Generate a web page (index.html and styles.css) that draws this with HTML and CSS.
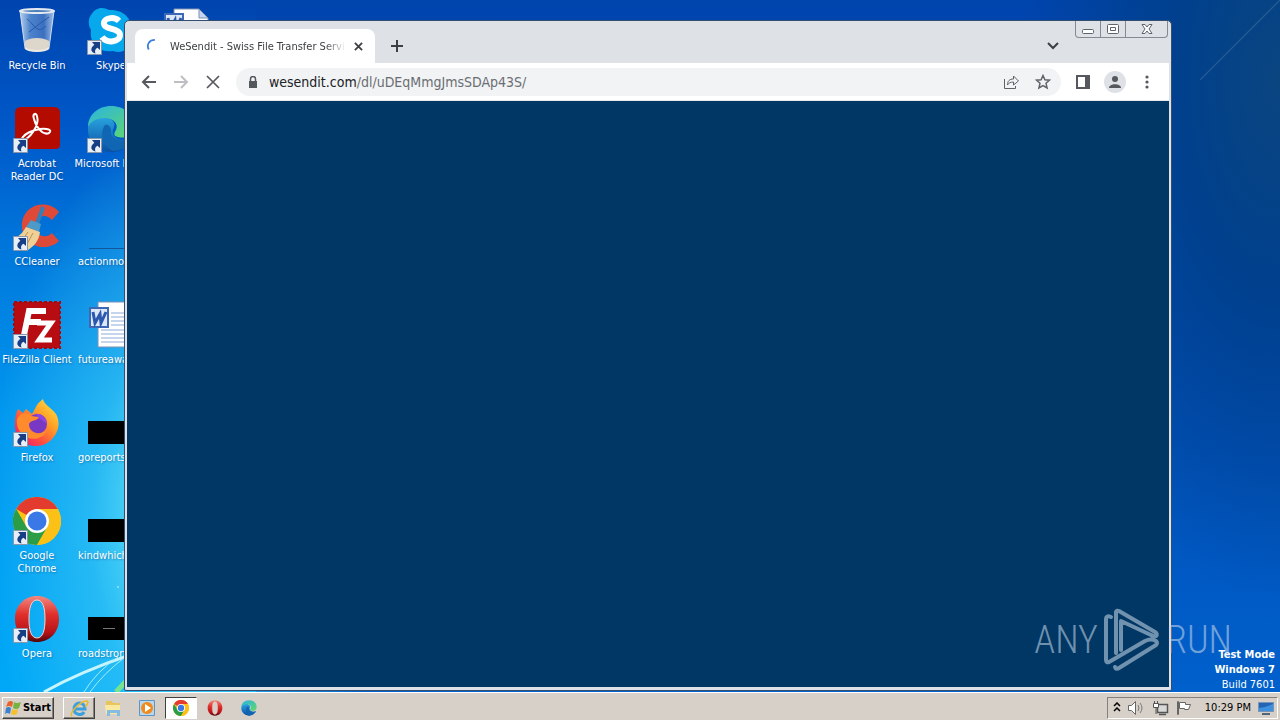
FILE: index.html
```html
<!DOCTYPE html>
<html lang="en">
<head>
    <meta charset="UTF-8">
    <meta name="viewport" content="width=device-width, initial-scale=1.0">
    <title>Desktop</title>
    <link rel="stylesheet" href="styles.css">
</head>
<body>

<!-- Shared drawings -->
<svg class="defs" width="0" height="0" aria-hidden="true">
    <defs>
        <linearGradient id="opera-red" x1="0" y1="0" x2="0" y2="1">
            <stop offset="0" stop-color="#f08a80"/><stop offset=".4" stop-color="#e0302c"/><stop offset=".8" stop-color="#b51218"/><stop offset="1" stop-color="#500508"/>
        </linearGradient>
        <linearGradient id="edge-blue" x1="0" y1="0" x2="0" y2="1">
            <stop offset="0" stop-color="#2aa6e0"/><stop offset="1" stop-color="#0b4fa3"/>
        </linearGradient>
        <linearGradient id="edge-green" x1="0" y1="0" x2="1" y2="1">
            <stop offset="0" stop-color="#29b4e2"/><stop offset="1" stop-color="#62d968"/>
        </linearGradient>
        <linearGradient id="fox" x1="1" y1="0" x2=".1" y2="1">
            <stop offset="0" stop-color="#fff04a"/><stop offset=".4" stop-color="#ff9d24"/><stop offset=".7" stop-color="#ff4b40"/><stop offset="1" stop-color="#e3197a"/>
        </linearGradient>
        <linearGradient id="bin-glass" x1="0" y1="0" x2="1" y2="0">
            <stop offset="0" stop-color="#b8cfea"/><stop offset=".3" stop-color="#4d84cc"/><stop offset=".7" stop-color="#3b6fc0"/><stop offset="1" stop-color="#a3bfe4"/>
        </linearGradient>
    </defs>
    <symbol id="arrow" viewBox="0 0 15 15">
        <path fill="#e8eef6" stroke="#8a97ab" d="M.5.5h14v14H.5z"/>
        <path fill="#183f86" d="M5 2h8v8l-2.500-2.300C8 9 7.500 11 8.500 13.500 4 12.500 2.500 8.500 7.300 4.700z"/>
    </symbol>
    <symbol id="chrome" viewBox="0 0 48 48">
        <circle cx="24" cy="24" r="24" fill="#fbc116"/>
        <path fill="#e33b2e" d="M24 24 3.200 12A24 24 0 0 1 44.800 12L24 12z"/>
        <path fill="#2a9d46" d="M3.200 12A24 24 0 0 0 24 48L34.400 30 24 24 13.600 30z"/>
        <path fill="#fbc116" d="M24 12h20.800A24 24 0 0 1 24 48l10.400-18z"/>
        <circle cx="24" cy="24" r="12" fill="#fff"/>
        <circle cx="24" cy="24" r="9.500" fill="#3b78e7"/>
    </symbol>
    <symbol id="opera" viewBox="0 0 48 48">
        <path fill="url(#opera-red)" fill-rule="evenodd" d="M24 1C37 1 46 11 46 24S37 47 24 47 2 37 2 24 11 1 24 1zM24 5c-6 0-8 8-8 19s2 19 8 19 8-8 8-19-2-19-8-19z"/>
        <path fill="none" stroke="#ffd0c8" stroke-width="1" d="M24 5c-6 0-8 8-8 19s2 19 8 19 8-8 8-19-2-19-8-19z"/>
    </symbol>
    <symbol id="edge" viewBox="0 0 48 48">
        <path fill="url(#edge-blue)" d="M1 22C4 10 17 8 25 15c4 4 2 7 1 10-2 7 6 12 19 9-5 9-13 14-22 13C9 46 0 36 1 22z"/>
        <path fill="url(#edge-green)" d="M1 22C1 10 11 1 24 1c14 0 23 9 23 20 0 10-9 13-16 11-5-1-4-4-2-7 3-6-3-12-11-12C9 13 3 17 1 22z"/>
        <path fill="#1166b4" d="M18 20c-6 8-2 21 8 26 8 0 15-5 19-12-12 5-22 0-21-9 0-3-3-6-6-5z"/>
    </symbol>
</svg>

<main class="desktop">
    <svg class="light-rays" viewBox="0 0 130 120" aria-hidden="true">
        <path d="M44 120Q80 100 130 83" stroke="#c6f5ff" stroke-width="3"/>
        <path d="M84 120Q96 100 118 85M90 120Q104 101 124 86" stroke="#a5edff" stroke-width="1"/>
        <path d="M116 120l14-15" stroke="#76e48e" stroke-width="5"/>
        <path d="M117 15h2" stroke="#c6f5ff" stroke-width="1"/>
    </svg>

    <div class="icons">
        <a class="icon" href="#">
            <svg viewBox="0 0 48 48">
                <path fill="url(#bin-glass)" stroke="#cfdcf0" d="M7 4h34l-5 37c-4 4-20 4-24 0z"/>
                <path fill="#ddd7cb" d="M12 34c6-4 18-4 24 0v7c-4 4-20 4-24 0z"/>
                <path fill="none" stroke="#ece9e4" stroke-width="2" d="M12 41c5 4 19 4 24 0"/>
                <path fill="none" stroke="#2559a9" d="M14 12c8 6 10 16 19 7M16 25l9-7 11-8"/>
                <ellipse cx="24" cy="4" rx="17" ry="2" fill="#4c7fbd" stroke="#e5eaf0" stroke-width="2"/>
            </svg>
            <span>Recycle Bin</span>
        </a>
        <a class="icon" href="#">
            <svg viewBox="0 0 48 48">
                <path fill="#b30b00" d="M8 2h33q6 0 6 6v32q0 4-5 4H7q-5 0-5-5V8q0-6 6-6z"/>
                <path fill="none" stroke="#fff" stroke-width="2" d="M10 35c6-1 17-14 14-24-1-4-5-2-3 3 2 8 9 17 15 14 4-3-2-5-9-4-8 1-15 5-17 8-1 1-1 2 0 3z"/>
                <use href="#arrow" x="0" y="33" width="15" height="15"/>
            </svg>
            <span>Acrobat<br>Reader DC</span>
        </a>
        <a class="icon" href="#">
            <svg viewBox="0 0 48 48">
                <path fill="#df4938" d="M46 9C40 1 27-1 18 5S6 23 12 34s24 14 34 4l-7-8c-7 7-17 2-17-7s10-14 17-6z"/>
                <path stroke="#337fb9" stroke-width="4" d="M30 4 24 21"/>
                <path fill="#4b9ac8" d="M18 17l10 4-2 8-13-5z"/>
                <path fill="#efd097" d="M13 24l14 5c-1 9-6 14-12 18L1 35c6-2 9-6 12-11z"/>
                <path stroke="#c98f49" d="M15 29 8 39M20 30l-7 13"/>
                <use href="#arrow" x="0" y="33" width="15" height="15"/>
            </svg>
            <span>CCleaner</span>
        </a>
        <a class="icon" href="#">
            <svg viewBox="0 0 48 48">
                <path fill="#b60c12" stroke="#a20b10" stroke-width="2" stroke-dasharray="3 2" d="M1 1h46v46H1z"/>
                <path fill="none" stroke="#fff" stroke-width="6" d="M11 34 16 10h17M13 21h15"/>
                <path fill="none" stroke="#fff" stroke-width="5" d="M24 22h14L26 39h13"/>
                <use href="#arrow" x="0" y="33" width="15" height="15"/>
            </svg>
            <span>FileZilla Client</span>
        </a>
        <a class="icon" href="#">
            <svg viewBox="0 0 48 48">
                <path fill="url(#fox)" d="M5 10l5 4 3-4 6 5c2-3 3-6 5-9 2-3 4-4 6-6 1 6 9 9 13 15 8 14-4 32-19 32S1 37 2 24c0-6 1-10 3-14z"/>
                <circle cx="24" cy="25" r="10" fill="#7838c4"/>
                <path fill="#ff8b2c" d="M4 20c4-7 10-7 14-3l8 1c-1 4-9 3-10 7 0 10 12 12 19 5-3 9-15 13-23 7-6-4-9-10-8-17z"/>
                <path fill="#8e46dc" d="M22 15c7-1 12 4 12 10l-8-6z"/>
                <use href="#arrow" x="0" y="33" width="15" height="15"/>
            </svg>
            <span>Firefox</span>
        </a>
        <a class="icon" href="#">
            <svg viewBox="0 0 48 48">
                <use href="#chrome" width="48" height="48"/>
                <use href="#arrow" x="0" y="33" width="15" height="15"/>
            </svg>
            <span>Google<br>Chrome</span>
        </a>
        <a class="icon" href="#">
            <svg viewBox="0 0 48 48">
                <use href="#opera" width="48" height="48"/>
                <use href="#arrow" x="0" y="33" width="15" height="15"/>
            </svg>
            <span>Opera</span>
        </a>

        <a class="icon" href="#">
            <svg viewBox="0 0 48 48">
                <path fill="#08a8ec" d="M4 8C8 1 15-1 22 3c17-1 25 12 22 24 3 13-8 21-18 17C12 46 2 37 4 23 1 18 1 12 4 8z"/>
                <path fill="none" stroke="#fff" stroke-width="6" d="M32 14c-5-5-16-3-15 3s16 4 16 11-13 9-18 2"/>
                <use href="#arrow" x="0" y="33" width="15" height="15"/>
            </svg>
            <span>Skype</span>
        </a>
        <a class="icon" href="#">
            <svg viewBox="0 0 48 48">
                <use href="#edge" width="48" height="48"/>
                <use href="#arrow" x="0" y="33" width="15" height="15"/>
            </svg>
            <span>Microsoft Edge</span>
        </a>
        <a class="icon cut" href="#">
            <svg viewBox="0 0 48 48"><path fill="#12579b" d="M2 45h46v1H2z"/></svg>
            <span>actionmor</span>
        </a>
        <a class="icon cut" href="#">
            <svg viewBox="0 0 48 48">
                <path fill="#fff" stroke="#7d91b5" d="M11 1h36v45H11z"/>
                <path stroke="#8eabd9" d="M24 12h22M24 16h22M24 20h22M24 24h22M14 29h32M14 33h32M14 37h32M14 41h32"/>
                <path fill="#dce7f8" stroke="#3d68b5" stroke-width="2" d="M3 7h18v19H3z"/>
                <path fill="none" stroke="#2b59ad" stroke-width="3" d="M6 11l2 11 5-9 1 9 5-11"/>
            </svg>
            <span>futureawa</span>
        </a>
        <a class="icon cut" href="#">
            <svg viewBox="0 0 48 48"><path d="M1 22h47v23H1z"/></svg>
            <span>goreports</span>
        </a>
        <a class="icon cut" href="#">
            <svg viewBox="0 0 48 48"><path d="M1 22h47v23H1z"/></svg>
            <span>kindwhich</span>
        </a>
        <a class="icon cut" href="#">
            <svg viewBox="0 0 48 48"><path d="M1 22h47v23H1z"/><path fill="#777" d="M16 33h12v1H16z"/></svg>
            <span>roadstron</span>
        </a>

        <a class="icon" href="#" aria-label="Document">
            <svg viewBox="0 0 48 48">
                <path fill="#fff" stroke="#7d91b5" d="M13 2h25l9 9v35H13z"/>
                <path fill="#c4d4ee" stroke="#7d91b5" d="M38 2v9h9z"/>
                <path fill="#dce7f8" stroke="#3d68b5" stroke-width="2" d="M4 7h18v19H4z"/>
                <path fill="none" stroke="#2b59ad" stroke-width="3" d="M7 11l2 11 5-9 1 9 5-11"/>
            </svg>
        </a>
    </div>

    <div class="build">
        <strong>Test Mode</strong>
        <strong>Windows 7</strong>
        <span>Build 7601</span>
    </div>

    <section class="window">
        <div class="tab-strip">
            <div class="tab">
                <svg class="spinner" viewBox="0 0 16 16"><path fill="none" stroke="#3b7ddd" stroke-width="2" d="M2 12C-1 6 3 1 9 1"/></svg>
                <span class="tab-title">WeSendit - Swiss File Transfer Service</span>
                <button class="tab-close" aria-label="Close tab">
                    <svg viewBox="0 0 10 10"><path stroke="#3c4043" stroke-width="2" d="M1 1l8 8M9 1 1 9"/></svg>
                </button>
            </div>
            <button class="new-tab" aria-label="New tab">
                <svg viewBox="0 0 12 12"><path stroke="#3c4043" stroke-width="2" d="M6 0v12M0 6h12"/></svg>
            </button>
            <button class="tab-search" aria-label="Search tabs">
                <svg viewBox="0 0 12 12"><path fill="none" stroke="#3c4043" stroke-width="2" d="M1 3l5 5 5-5"/></svg>
            </button>
            <div class="caption">
                <button aria-label="Minimize"><svg viewBox="0 0 14 12"><rect x="1.500" y="6.500" width="11" height="4" rx="1" fill="#fff" stroke="#5f646c"/></svg></button>
                <button aria-label="Maximize"><svg viewBox="0 0 14 12"><rect x="1.500" y="1.500" width="11" height="9" rx="1" fill="#fff" stroke="#5f646c"/><path fill="none" stroke="#5f646c" d="M4.500 4.500h5v3h-5z"/></svg></button>
                <button class="wide" aria-label="Close"><svg viewBox="0 0 14 12"><path fill="#fff" stroke="#5f646c" d="M2 1.500h3l2 2.500 2-2.500h3L9 6l3 4.500H9L7 8l-2 2.500H2L5 6z"/></svg></button>
            </div>
        </div>
        <div class="toolbar">
            <button aria-label="Back"><svg viewBox="0 0 16 16"><path fill="none" stroke="#55585d" stroke-width="2" d="M15 8H2M8 2 2 8l6 6"/></svg></button>
            <button aria-label="Forward"><svg viewBox="0 0 16 16"><path fill="none" stroke="#bdbfc2" stroke-width="2" d="M1 8h13M8 2l6 6-6 6"/></svg></button>
            <button aria-label="Stop"><svg viewBox="0 0 16 16"><path stroke="#55585d" stroke-width="1.700" d="M2 2l12 12M14 2 2 14"/></svg></button>
            <div class="address">
                <svg class="lock" viewBox="0 0 10 12"><path fill="#55585d" d="M1 5h8v7H1z"/><path fill="none" stroke="#55585d" stroke-width="1.500" d="M2.500 5V3a2.500 2.500 0 0 1 5 0v2"/></svg>
                <a class="url" href="#">wesendit.com<span>/dl/uDEqMmgJmsSDAp43S/</span></a>
                <button aria-label="Share"><svg viewBox="0 0 16 16"><path fill="none" stroke="#5f6368" d="M1.500 5v9.500h11V12M4.500 11c0-4 2-6 6-6V2l5 5-5 4V8c-3 0-5 1-6 3z"/></svg></button>
                <button aria-label="Bookmark"><svg viewBox="0 0 16 16"><path fill="none" stroke="#5f6368" stroke-width="1.500" d="M8 1.500l1.900 4.300 4.600.4L11 9.300l1.100 4.600L8 11.500l-4.100 2.400L5 9.300 1.500 6.200l4.600-.4z"/></svg></button>
            </div>
            <button aria-label="Side panel"><svg viewBox="0 0 16 16"><path fill="#55585d" fill-rule="evenodd" d="M1 1h14v14H1zM3 3v10h7V3z"/></svg></button>
            <button class="profile" aria-label="Profile"><svg viewBox="0 0 16 16"><circle cx="8" cy="5" r="3" fill="#55585d"/><path fill="#55585d" d="M2 14c0-5 12-5 12 0z"/></svg></button>
            <button aria-label="Menu"><svg viewBox="0 0 16 16"><g fill="#55585d"><circle cx="8" cy="3" r="1.600"/><circle cx="8" cy="8" r="1.600"/><circle cx="8" cy="13" r="1.600"/></g></svg></button>
        </div>
        <div class="page"></div>
    </section>

    <div class="watermark">
        <span>ANY</span>
        <svg viewBox="0 0 56 64">
            <path fill="none" stroke="currentColor" stroke-width="4" stroke-linejoin="round" stroke-linecap="round" d="M12 45V4q1-2 3-1L51 24q3 2 1 4-2 1-5-1L17 13v29M7 9Q2 7 2 11v41q0 3 3 2l36-21M5 54l36-21q6-3 11 0 2 2 0 4L15 60q-3 2-4-1"/>
        </svg>
        <span>RUN</span>
    </div>
</main>

<footer class="taskbar">
    <button class="start">
        <svg viewBox="0 0 16 16"><path fill="#e8622a" d="M3 2q3-2 5 0L7 7Q4 5 1 7z"/><path fill="#77b43f" d="M9 2q3 2 7 0l-2 6q-3 2-6 0z"/><path fill="#3b82d0" d="M1 8q3-2 5 0l-1 6q-3-2-5 0z"/><path fill="#f5c02c" d="M7 9q3 2 6 0l-1 5q-3 2-6 0z"/></svg>
        Start
    </button>
    <button class="task raised" aria-label="Internet Explorer">
        <svg viewBox="0 0 20 20"><path fill="none" stroke="#3ba0de" stroke-width="3" d="M5 11h11c0-8-11-8-11 0 0 6 8 7 10 3"/><path fill="none" stroke="#e9b92d" stroke-width="1.500" d="M3 18c-4-3 10-16 15-15 2 1 0 4-2 6"/></svg>
    </button>
    <button class="task" aria-label="Explorer">
        <svg viewBox="0 0 20 20"><path fill="#e9c45c" d="M3 3h6l1 2h7v11H3z"/><path fill="#fbe9a0" d="M2 7h15v9H3z"/><path fill="#85bde2" d="M4 12h13v6h-3v-3H7v3H4z"/></svg>
    </button>
    <button class="task" aria-label="Media Player">
        <svg viewBox="0 0 20 20"><path fill="#b9d6ec" stroke="#5c96c5" d="M2.500 2.500h15v15h-15z"/><circle cx="10" cy="10" r="6" fill="#f08a1c"/><path fill="#fff" d="M8 6l6 4-6 4z"/></svg>
    </button>
    <button class="task active" aria-label="Chrome">
        <svg viewBox="0 0 20 20"><use href="#chrome" x="2" y="2" width="16" height="16"/></svg>
    </button>
    <button class="task" aria-label="Opera">
        <svg viewBox="0 0 20 20"><use href="#opera" x="2" y="2" width="16" height="16"/></svg>
    </button>
    <button class="task" aria-label="Edge">
        <svg viewBox="0 0 20 20"><use href="#edge" x="2" y="2" width="16" height="16"/></svg>
    </button>
    <div class="tray">
        <svg class="small" viewBox="0 0 8 12"><path fill="none" stroke="#000" stroke-width="1.500" d="M1 4l3-3 3 3M1 9l3-3 3 3"/></svg>
        <svg viewBox="0 0 18 16"><path fill="#fff" stroke="#666" d="M1.500 5.500h3l4-4v13l-4-4h-3z"/><path fill="none" stroke="#777" d="M11 5q2 3 0 6M13 3q4 5 0 10"/></svg>
        <svg viewBox="0 0 18 16"><path fill="#d8d8d8" stroke="#555" stroke-width="1.500" d="M6.500 4.500h10v8h-10zM8 14.500h7"/><path fill="#fff" stroke="#555" d="M2.500 3.500h5v4h-5zM3.500 1v2M6.500 1v2M5 8v6"/></svg>
        <svg viewBox="0 0 18 16"><path fill="#fff" stroke="#666" d="M2.500 1.500h1v13h-1zM4.500 2.500h6v2h5l-2 5H9.500v-1h-5z"/></svg>
        <time>10:29 PM</time>
        <svg viewBox="0 0 18 16"><path fill="#2364b4" stroke="#7893b5" d="M1.500 2.500h15v9h-15z"/><path fill="#3d91df" d="M2 8q7-1 14-4v7H2z"/><path stroke="#52637c" stroke-width="2" d="M5 14h8"/></svg>
    </div>
</footer>

</body>
</html>
```
FILE: styles.css
```css
* {
    box-sizing: border-box;
}

body {
    margin: 0;
    height: 100vh;
    display: flex;
    flex-direction: column;
    overflow: hidden;
    font-family: "DejaVu Sans Condensed", "Noto Sans", sans-serif;
    font-size: 11px;
    line-height: 13px;
}

button {
    display: flex;
    align-items: center;
    justify-content: center;
    margin: 0;
    padding: 0;
    border: 0;
    background: none;
    font: inherit;
}

svg {
    display: block;
    flex: none;
}

.defs {
    position: absolute;
}

/* Wallpaper */
.desktop {
    position: relative;
    flex: 1;
    min-height: 0;
    background:
        linear-gradient(135deg, transparent 49%, #ffffff20 50%, transparent 51%) right top / 80px 80px no-repeat,
        radial-gradient(ellipse 260px 520px at 100% 80px, #0a4580 0%, #00408d 40%, transparent 100%),
        radial-gradient(ellipse 200px 400px at 190px 520px, #7af0f5 0%, #42cdf690 50%, transparent 100%),
        linear-gradient(#0044ae 0%, #0058c8 18%, #007add 38%, #0097ef 60%, #00a8f7 100%) left / 20% 100% no-repeat,
        linear-gradient(#0044ae, #0050b8 60%, #0060cc);
}

.light-rays {
    position: absolute;
    left: 0;
    bottom: 0;
    width: 130px;
    height: 120px;
    fill: none;
}

.icons {
    display: grid;
    grid-auto-flow: column;
    grid-template-rows: repeat(7, 98px);
    grid-auto-columns: 74px;
    padding-top: 7px;
}

.icon {
    display: flex;
    flex-direction: column;
    align-items: center;
    gap: 4px;
    color: #fff;
    text-align: center;
    text-decoration: none;
    text-shadow: 1px 1px 2px #00205060;
    white-space: nowrap;
}

.icon svg {
    width: 48px;
    height: 48px;
}

.icon.cut span {
    align-self: flex-start;
    padding-left: 4px;
}

.build {
    position: absolute;
    right: 5px;
    bottom: 0;
    display: flex;
    flex-direction: column;
    color: #fff;
    text-align: right;
    line-height: 15px;
}

/* Browser window */
.window {
    position: absolute;
    top: 20px;
    right: 108px;
    bottom: 1px;
    left: 124px;
    display: flex;
    flex-direction: column;
    padding: 0 2px 3px;
    border: 1px solid #344e70;
    border-radius: 5px 5px 2px 2px;
    background: #dee1e6;
}

.tab-strip {
    display: flex;
    align-items: flex-end;
    height: 42px;
    padding-left: 8px;
}

.tab {
    display: flex;
    align-items: center;
    width: 240px;
    height: 34px;
    padding: 0 10px 0 12px;
    border-radius: 8px 8px 0 0;
    background: #fff;
}

.spinner {
    width: 14px;
    height: 14px;
}

.tab-title {
    flex: 1;
    margin: 0 6px 0 9px;
    overflow: hidden;
    color: #3c4043;
    white-space: nowrap;
    mask-image: linear-gradient(90deg, #000 88%, transparent);
}

.tab-close svg {
    width: 9px;
    height: 9px;
}

.tab-close {
    width: 13px;
    height: 16px;
}

.new-tab {
    width: 28px;
    height: 34px;
    margin-left: 8px;
}

.new-tab svg,
.tab-search svg {
    width: 12px;
    height: 12px;
}

.tab-search {
    width: 28px;
    height: 34px;
    margin-left: auto;
}

.caption {
    display: flex;
    align-self: flex-start;
    margin: 0 1px 0 8px;
    border: 1px solid #858a92;
    border-top: 0;
    border-radius: 0 0 4px 4px;
}

.caption button {
    width: 25px;
    height: 16px;
    border-right: 1px solid #858a92;
}

.caption .wide {
    width: 41px;
    border-right: 0;
}

.caption svg {
    width: 14px;
    height: 12px;
}

.toolbar {
    display: flex;
    align-items: center;
    height: 38px;
    padding: 0 6px;
    border-bottom: 1px solid #e6e8eb;
    background: #fff;
}

.toolbar button {
    width: 32px;
    height: 28px;
}

.toolbar svg {
    width: 16px;
    height: 16px;
}

.address {
    display: flex;
    flex: 1;
    align-items: center;
    height: 28px;
    margin: 0 6px 0 7px;
    padding: 0 2px 0 12px;
    border-radius: 14px;
    background: #f1f3f4;
}

.toolbar .lock {
    width: 10px;
    height: 12px;
}

.url {
    flex: 1;
    margin-left: 11px;
    color: #202124;
    font-size: 14px;
    line-height: 18px;
    text-decoration: none;
}

.url span {
    color: #6a6e73;
}

.toolbar .profile {
    width: 22px;
    height: 22px;
    margin: 0 5px;
    border-radius: 50%;
    background: #dee1e6;
}

.page {
    flex: 1;
    background: #003764;
}

.watermark {
    position: absolute;
    right: 48px;
    bottom: 20px;
    display: flex;
    align-items: center;
    gap: 6px;
    color: #c8d8e890;
    font-family: "Roboto Condensed", "Liberation Sans Narrow", Roboto, sans-serif;
    font-size: 38px;
    font-weight: 300;
    line-height: 64px;
}

.watermark svg {
    width: 56px;
    height: 64px;
}

/* Taskbar */
.taskbar {
    display: flex;
    align-items: center;
    gap: 2px;
    height: 28px;
    padding: 2px 2px 0;
    border-top: 1px solid #fff;
    background: #d6d0c8;
}

.start,
.task {
    height: 22px;
}

.start {
    width: 52px;
    gap: 2px;
    margin-right: 7px;
    font-weight: bold;
}

.start svg {
    width: 16px;
    height: 16px;
}

.start,
.raised {
    border: 1px solid;
    border-color: #fff #404040 #404040 #fff;
    box-shadow: inset -1px -1px #858079;
}

.task {
    width: 32px;
}

.task svg {
    width: 20px;
    height: 20px;
}

.active {
    border: 1px solid;
    border-color: #404040 #fff #fff #404040;
    background: #fff;
}

.tray {
    display: flex;
    align-items: center;
    gap: 6px;
    height: 22px;
    margin-left: auto;
    padding: 0 2px 0 5px;
    border: 1px solid;
    border-color: #858079 #fff #fff #858079;
}

.tray svg {
    width: 18px;
    height: 16px;
}

.tray .small {
    width: 8px;
    height: 12px;
}

.tray time {
    margin-left: 6px;
}
```
